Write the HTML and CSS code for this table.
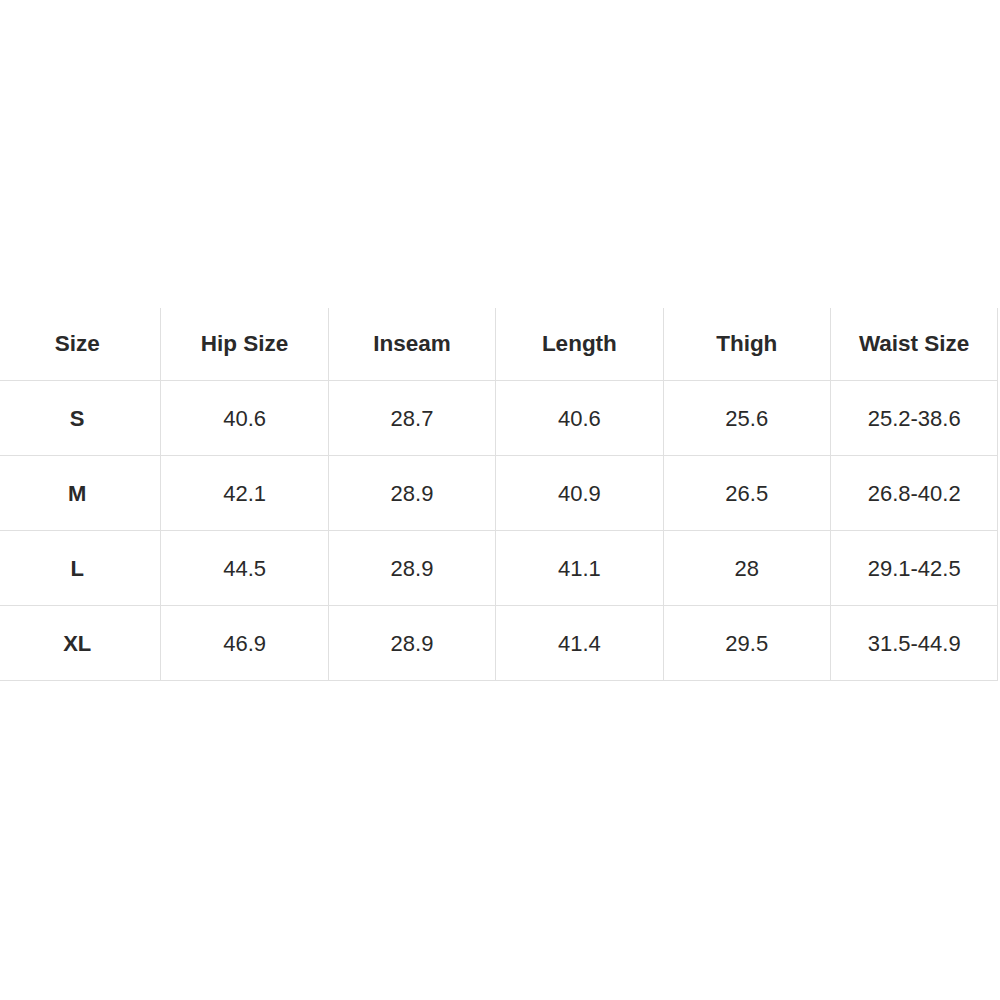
FILE: index.html
```html
<!DOCTYPE html>
<html>
<head>
<meta charset="utf-8">
<link rel="stylesheet" href="styles.css">
</head>
<body>
<div class="chart">
  <div class="cell head">Size</div>
  <div class="cell head">Hip Size</div>
  <div class="cell head">Inseam</div>
  <div class="cell head">Length</div>
  <div class="cell head">Thigh</div>
  <div class="cell head">Waist Size</div>

  <div class="cell label">S</div>
  <div class="cell">40.6</div>
  <div class="cell">28.7</div>
  <div class="cell">40.6</div>
  <div class="cell">25.6</div>
  <div class="cell">25.2-38.6</div>

  <div class="cell label">M</div>
  <div class="cell">42.1</div>
  <div class="cell">28.9</div>
  <div class="cell">40.9</div>
  <div class="cell">26.5</div>
  <div class="cell">26.8-40.2</div>

  <div class="cell label">L</div>
  <div class="cell">44.5</div>
  <div class="cell">28.9</div>
  <div class="cell">41.1</div>
  <div class="cell">28</div>
  <div class="cell">29.1-42.5</div>

  <div class="cell label">XL</div>
  <div class="cell">46.9</div>
  <div class="cell">28.9</div>
  <div class="cell">41.4</div>
  <div class="cell">29.5</div>
  <div class="cell">31.5-44.9</div>
</div>
</body>
</html>
```

FILE: styles.css
```css
html, body {
  margin: 0;
  padding: 0;
  background: #ffffff;
}

body {
  width: 1000px;
  height: 1000px;
  overflow: hidden;
  font-family: "Liberation Sans", Arial, Helvetica, sans-serif;
  color: #2a2a2a;
}

.chart {
  display: grid;
  grid-template-columns: repeat(6, 167.4px);
  grid-template-rows: 73px repeat(4, 75px);
  margin: 308px 0 0 -6px;
  width: 1005px;
}

.cell {
  box-sizing: border-box;
  display: flex;
  align-items: center;
  justify-content: center;
  border-right: 1px solid #e0e0e0;
  border-bottom: 1px solid #e0e0e0;
  font-size: 22px;
  padding-top: 2px;
}

.head {
  font-weight: bold;
  font-size: 22.5px;
  padding-top: 0;
}

.label {
  font-weight: bold;
}
```
